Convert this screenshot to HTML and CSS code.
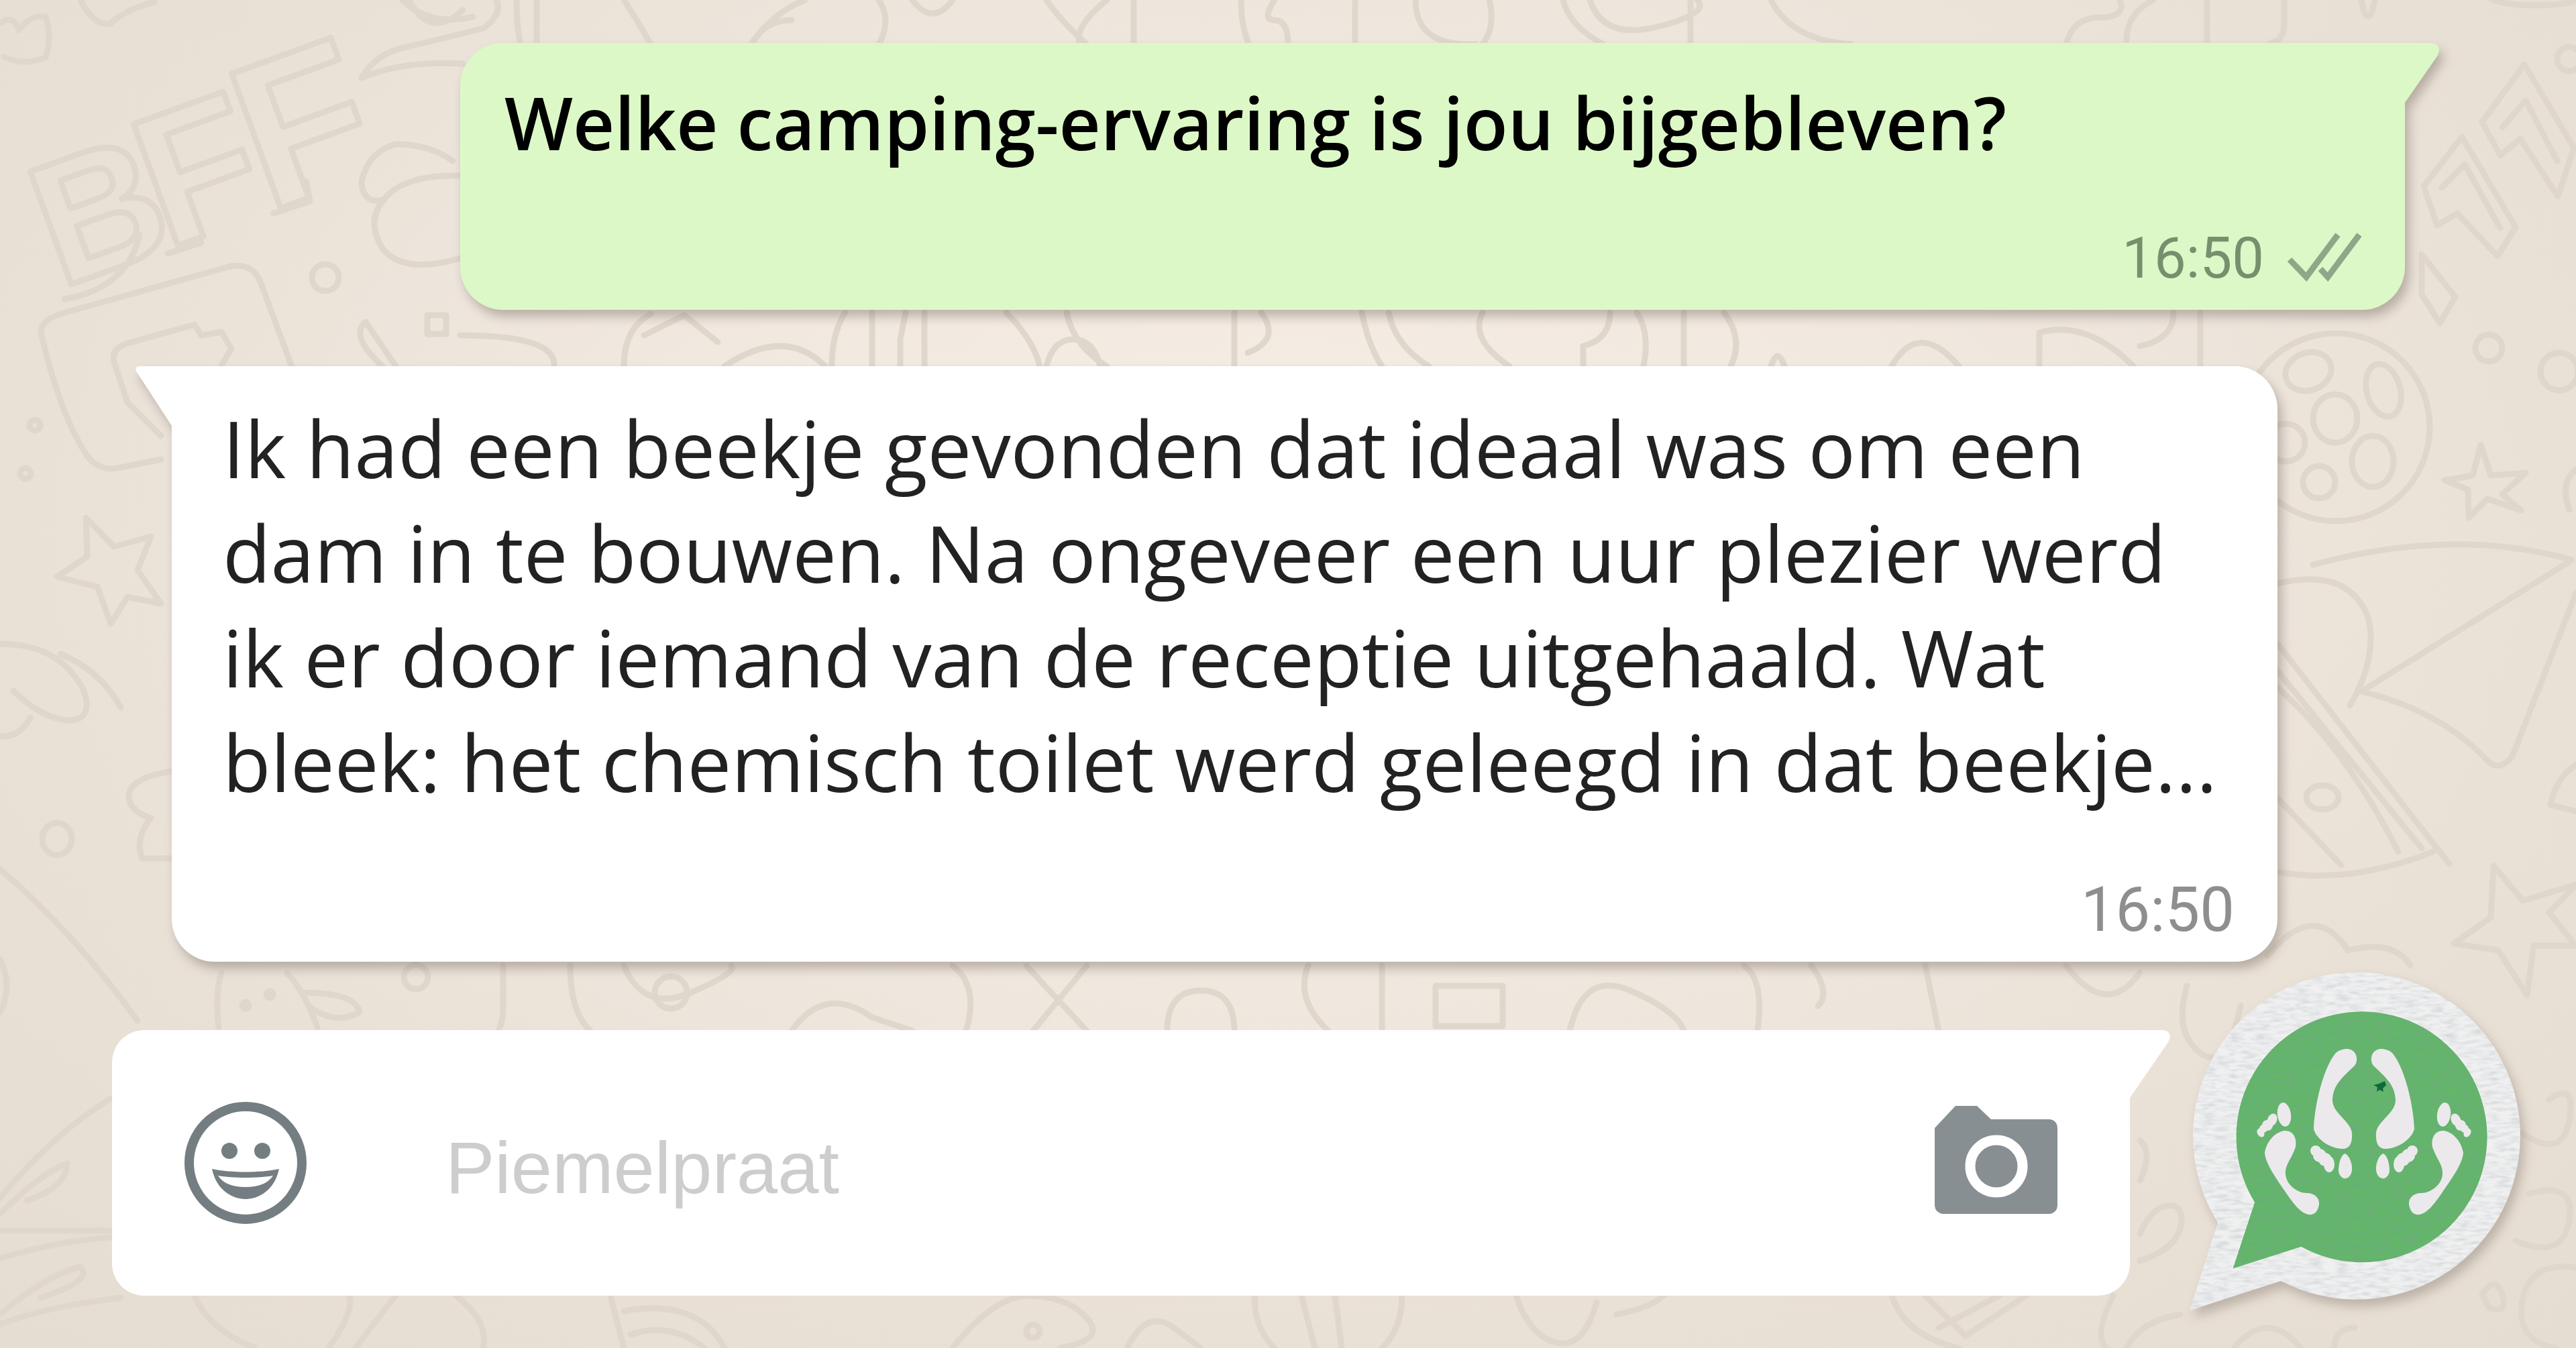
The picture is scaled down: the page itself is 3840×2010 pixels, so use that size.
FILE: index.html
```html
<!DOCTYPE html>
<html lang="nl">
<head>
    <meta charset="UTF-8">
    <meta name="viewport" content="width=device-width, initial-scale=1.0">
    <title>Piemelpraat</title>
    <link rel="stylesheet" href="styles.css">
</head>
<body>
    <svg class="wallpaper" viewBox="0 0 3840 2010" preserveAspectRatio="xMidYMid slice" aria-hidden="true">
        <!-- top left -->
        <g transform="rotate(-20 90 430)" class="doodle-letters">
            <text x="90" y="430"><tspan font-size="260">B</tspan><tspan font-size="280" dx="-20">F</tspan><tspan font-size="310" dx="-10">F</tspan></text>
        </g>
        <path d="M96 446Q190 430 208 350M250 378L300 362M408 318L462 300L456 270"/>
        <path d="M0 35q20 -15 28 10q20 -25 40 -20q10 30 0 60q-30 14 -62 0"/>
        <path d="M120 0q20 40 45 35q20 -20 65 -32"/>
        <path d="M539 116Q560 80 605 70T721 42Q750 20 740 0M539 116Q600 90 690 95M600 0q40 40 105 25"/>
        <path d="M539 270Q550 225 590 215Q640 215 675 240M539 270Q540 305 572 298Q600 260 686 262M572 298Q545 330 570 370Q600 410 686 385"/>
        <circle cx="485" cy="414" r="20"/>
        <rect x="637" y="470" width="28" height="28"/>
        <path d="M62 500Q56 480 90 468L340 398Q375 390 388 420L440 560M62 500Q90 620 130 680Q150 705 180 697L240 685M170 540Q165 520 190 512L290 484L300 500L330 495L345 520L330 545M170 540L190 600L240 650"/>
        <circle cx="52" cy="634" r="8"/>
        <circle cx="38" cy="706" r="8"/>
        <path d="M128 772L170 815L225 800L205 850L240 900L190 890L165 930L145 875L85 860L130 830Z"/>
        <path d="M0 960Q90 960 125 1030Q140 1075 100 1074Q60 1070 20 1030M0 1098Q30 1100 45 1070M90 975Q150 1000 180 1055"/>
        <ellipse cx="85" cy="1251" rx="22" ry="24"/>
        <path d="M0 1296Q110 1390 205 1522M256 1150Q190 1160 192 1190Q195 1210 225 1220Q200 1250 212 1280H256"/>
        <path d="M0 1430q20 40 0 80M0 1786Q80 1690 165 1638M0 1810Q60 1750 100 1735Q100 1770 40 1790M0 1835H165M0 1876Q90 1850 165 1845M0 1960Q70 1900 120 1889Q140 1910 60 1935M0 1975Q60 1950 180 1935"/>
        <!-- right side -->
        <path d="M3700 182L3763 96L3837 221L3813 293L3757 207L3727 232Z"/>
        <path d="M3613 278L3670 204L3750 339L3723 382L3663 318L3633 336Z"/>
        <path d="M3730 190L3765 150L3812 240M3640 280L3674 245L3727 340M3610 379L3660 443L3637 482L3610 439Z"/>
        <ellipse cx="3780" cy="-6" rx="70" ry="14"/>
        <circle cx="3830" cy="88" r="18"/>
        <circle cx="3710" cy="519" r="20"/>
        <circle cx="3815" cy="554" r="28"/>
        <circle cx="3482" cy="637" r="140"/>
        <ellipse cx="3441" cy="554" rx="35" ry="28" transform="rotate(-20 3441 554)"/>
        <ellipse cx="3553" cy="582" rx="25" ry="40" transform="rotate(-15 3553 582)"/>
        <ellipse cx="3481" cy="624" rx="33" ry="36"/>
        <ellipse cx="3537" cy="688" rx="31" ry="38"/>
        <circle cx="3457" cy="719" r="24"/>
        <circle cx="3408" cy="660" r="28"/>
        <path d="M3698 663L3713 709L3765 705L3730 737L3758 761L3708 744L3680 772L3679 730L3644 716L3686 709Z"/>
        <path d="M3717 1291L3761 1343L3840 1319L3800 1361L3840 1410L3777 1410L3767 1484L3724 1417L3658 1407L3713 1368Z"/>
        <path d="M3448 842Q3660 785 3834 835L3520 1031Q3640 1060 3710 1136Q3727 1150 3745 1128L3840 884M3840 700q-25 20 -10 60M3840 1140q-30 20 -38 60l38 10"/>
        <path d="M3395 870Q3500 845 3530 920Q3545 980 3503 1052M3395 960L3651 1288M3395 1000L3610 1265M3395 1025Q3500 1120 3575 1270M3395 1190L3490 1290M3395 1300Q3500 1320 3627 1270"/>
        <ellipse cx="3462" cy="1189" rx="24" ry="18"/>
        <path d="M3380 1425Q3450 1340 3500 1417Q3570 1400 3593 1440M3260 1470q-20 70 20 100t60 -70M3800 1640q40 -30 30 30t-70 20M3770 1780q70 -20 60 40t-80 30M3840 1890q-70 -10 -80 50t50 70M3700 1930q20 -30 30 0t-20 20z"/>
        <path d="M3190 1880q60 -20 62 -60q0 -30 -30 -20q-20 10 -32 40M3190 1700q20 20 0 60"/>
        <!-- strip above the question -->
        <path d="M610 0q30 60 80 15M770 0q0 40 6 66M800 0v66M930 0q20 30 40 66M1200 0q-50 20 -80 66M1180 30q-40 0 -60 36M1310 0q20 30 0 66M1360 0q30 40 60 0M1560 0q20 30 60 66M1650 0q-50 40 -40 66M1690 0v66M1850 0q0 40 12 66M1900 0q-20 30 0 30t20 36M2020 0v66M2110 0q0 70 90 66M2220 0q10 40 -10 66M2330 0q10 40 60 66M2370 0q20 60 100 40t60 -40M2520 0v66M2640 0q30 60 120 66M3080 66q10 -40 50 -40t30 -26M3170 60q0 -40 40 -60M3290 0v62M3405 0v40q-2 20 -20 24M3520 0q10 50 20 0"/>
        <!-- strip between the messages -->
        <path d="M686 500Q830 500 826 546M570 546Q520 500 545 480L590 546M930 546Q930 490 970 468M960 500l60 -30 50 40M1080 546q90 -60 150 0M1260 466q-20 30 -20 80M1300 466v80M1350 466l-8 40v40M1378 466v80M1500 466q40 40 50 80M1590 466q10 50 60 80M1560 546q10 -40 40 -40t40 40M1840 466v80M1880 466q30 40 -20 60M2030 466q10 50 30 80M2070 466q10 50 60 80M2210 466q-20 40 40 80M2400 466q0 40 -40 50v30M2440 466q20 30 10 80M2510 466v80M2570 466q30 40 10 80M2640 546q10 -30 20 0M2820 546q40 -70 100 0M3040 546v-50q70 -20 140 50M3240 466q0 40 -50 50M3280 466v80"/>
        <!-- strip above the input -->
        <path d="M330 1451Q320 1480 326 1532M428 1451Q455 1480 473 1532M450 1480Q530 1480 536 1509Q500 1530 460 1500M750 1440v60q0 30 -10 40M850 1440q0 70 30 97M930 1440q30 70 100 40t60 -40M1180 1537q50 -70 120 -20l60 20M1420 1440q40 30 20 97M1530 1440l90 97M1540 1537l80 -97M1740 1537q0 -60 50 -60t50 60M1950 1440q-20 50 30 97M2060 1440v97M2140 1470h100v60h-100zM2340 1537q20 -90 90 -60t80 60M2600 1440q30 20 20 97M2700 1440q30 40 10 60M2870 1440l20 97M3080 1440q60 80 110 10"/>
        <circle cx="366" cy="1499" r="5"/>
        <circle cx="402" cy="1483" r="5"/>
        <circle cx="620" cy="1457" r="18"/>
        <circle cx="1000" cy="1480" r="24"/>
        <!-- bottom strip -->
        <path d="M290 1932q20 50 90 78M520 1932q10 20 -30 78M590 1932q-40 50 -60 78M680 1932q50 40 40 78M910 1932l20 78M930 1955q110 -20 150 55M940 1990q60 -20 110 20M1420 2010Q1480 1935 1530 1932Q1590 1932 1620 1965T1580 2010M1680 2010q30 -60 70 -30t40 30M1870 1932q0 50 30 78M1940 1932l20 78M1990 1932l10 78M2090 1932q0 50 -30 78M2260 1932q20 60 60 70t60 -60M2410 1960q50 -10 70 -28M2820 1932q20 60 100 78M2870 1932l60 60 90 -60M2890 1980l90 -48M3150 1932q-30 60 -10 78M3170 2010q20 -40 80 -50M3330 2010q50 -60 100 0M3480 2010q0 -30 30 -30"/>
        <circle cx="1540" cy="1985" r="10"/>
    </svg>

    <main class="chat">
        <section class="bubble sent">
            <p class="question">Welke camping-ervaring is jou bijgebleven?</p>
            <div class="meta">
                <time datetime="16:50">16:50</time>
                <svg class="ticks" viewBox="0 0 112 76" role="img" aria-label="Gelezen">
                    <path d="M4 40L29 66L76 3M50 54L61 66L108 3"/>
                </svg>
            </div>
        </section>

        <section class="bubble received">
            <p class="answer">Ik had een beekje gevonden dat ideaal was om een dam in te bouwen. Na ongeveer een uur plezier werd ik er door iemand van de receptie uitgehaald. Wat bleek: het chemisch toilet werd geleegd in dat beekje...</p>
            <div class="meta">
                <time datetime="16:50">16:50</time>
            </div>
        </section>

        <footer class="footer">
            <form class="composer">
                <button type="button" class="icon-button" aria-label="Emoji">
                    <svg class="smiley" viewBox="0 0 183 183">
                        <circle cx="91" cy="91" r="84" fill="none" stroke="#747e82" stroke-width="14"/>
                        <circle cx="67" cy="73" r="12"/>
                        <circle cx="116" cy="73" r="12"/>
                        <path d="M41 100C70 106 112 106 141 100C135 130 112 145 91 145C70 145 47 130 41 100Z"/>
                        <path fill="#fff" d="M50 110C70 114 112 114 132 110C124 122 110 127 91 127C72 127 58 122 50 110Z"/>
                    </svg>
                </button>
                <input type="text" class="message" placeholder="Piemelpraat" aria-label="Bericht">
                <button type="button" class="icon-button" aria-label="Camera">
                    <svg class="camera" viewBox="0 0 183 171">
                        <path d="M31 0H63L84 20H172Q183 22 183 33V149Q182 159 172 161H12Q1 159 0 149V33Z"/>
                        <circle cx="92" cy="90" r="39" fill="none" stroke="#fff" stroke-width="15"/>
                    </svg>
                </button>
            </form>

            <svg class="logo" viewBox="0 0 500 504" role="img" aria-label="Piemelpraat logo">
                <defs>
                    <filter id="paper" x="0" y="0" width="100%" height="100%">
                        <feTurbulence type="fractalNoise" baseFrequency="0.05 0.2" numOctaves="3" seed="4" result="noise"/>
                        <feColorMatrix in="noise" type="matrix" values="0 0 0 0 0.2  0 0 0 0 0.3  0 0 0 0 0.3  0.6 0 0 0 -0.22" result="grain"/>
                        <feComposite in="grain" in2="SourceGraphic" operator="in" result="cut"/>
                        <feMerge>
                            <feMergeNode in="SourceGraphic"/>
                            <feMergeNode in="cut"/>
                        </feMerge>
                    </filter>
                    <g id="feet">
                        <path d="M236 112C251 113 253 130 247 137C227 156 214 167 214 190C216 209 241 220 243 237C244 254 239 261 229 261C206 260 188 243 186 231C187 201 198 145 218 119C223 114 229 112 236 112Z"/>
                        <path d="M233 268C240 272 244 285 243 293C241 309 225 309 223 294C223 284 226 270 233 268Z"/>
                        <circle cx="189" cy="264" r="8"/>
                        <circle cx="195" cy="271" r="10"/>
                        <circle cx="203" cy="277" r="10"/>
                        <ellipse cx="209" cy="284" rx="8" ry="12"/>
                        <path d="M144 234C157 234 161 248 159 258C153 277 143 284 144 299C145 314 161 327 176 327C188 327 195 335 194 344C192 356 186 360 178 359C165 356 155 341 145 327C133 309 114 284 113 267C116 248 131 234 144 234Z"/>
                        <ellipse cx="142" cy="210" rx="10" ry="18" transform="rotate(-8 142 210)"/>
                        <ellipse cx="124" cy="218" rx="7" ry="10" transform="rotate(25 124 218)"/>
                        <circle cx="117" cy="226" r="8"/>
                        <circle cx="111" cy="231" r="6"/>
                        <ellipse cx="107" cy="237" rx="5" ry="7" transform="rotate(-30 107 237)"/>
                    </g>
                </defs>
                <path fill="#f0f0f1" filter="url(#paper)" d="M43 371A244 244 0 1 1 137 458L1 502Z"/>
                <path fill="#64b66b" stroke="#f4f2f4" stroke-width="2" filter="url(#paper)" d="M97 341A188 188 0 1 1 167 408L64 441Z"/>
                <path fill="#0e6a3a" d="M275 166L283 164L292 160L294 166L289 171L290 176L284 173L280 176L281 169Z"/>
                <g fill="#ebe9ec">
                    <use href="#feet"/>
                    <use href="#feet" transform="matrix(-1 0 0 1 522 0)"/>
                </g>
            </svg>
        </footer>
    </main>
</body>
</html>
```
FILE: styles.css
```css
* {
    margin: 0;
    padding: 0;
    box-sizing: border-box;
}

body {
    position: relative;
    min-height: 100vh;
    overflow: hidden;
    background: radial-gradient(ellipse at 50% 40%, #f6ede5 0%, #f1e8e0 35%, #e9e0d6 70%, #e6ddd2 100%);
    font-family: "Open Sans", sans-serif;
    color: #222;
}

.wallpaper {
    position: absolute;
    top: 0;
    left: 0;
    width: 100%;
    height: 100%;
    fill: none;
    stroke: #e0d7cc;
    stroke-width: 9;
    stroke-linejoin: round;
    stroke-linecap: round;
}

.doodle-letters {
    font-family: "Liberation Sans", sans-serif;
    font-weight: bold;
}

.chat {
    position: relative;
    padding: 64px 0 40px;
}

/* messages */
.bubble {
    position: relative;
    border-radius: 64px;
    padding: 44px 64px 22px 66px;
    filter: drop-shadow(6px 10px 8px rgba(90, 75, 65, 0.35));
}

.bubble::before,
.composer::after {
    content: "";
    position: absolute;
    top: 0;
}

.sent {
    margin: 0 255px 84px 686px;
    border-top-right-radius: 0;
    background: #dcf8c7;
}

.sent::before {
    left: calc(100% - 1px);
    width: 54px;
    height: 90px;
    background: #dcf8c7;
    clip-path: path("M0 0H40Q58 3 49 20L1 89H0Z");
}

.received {
    margin: 0 445px 18px 256px;
    padding-left: 76px;
    border-top-left-radius: 0;
    background: #fff;
}

.received::before {
    right: calc(100% - 1px);
    width: 56px;
    height: 90px;
    background: #fff;
    clip-path: path("M56 0H6Q-2 2 3 9L55 89H56Z");
}

.question {
    font-size: 108px;
    font-weight: 600;
    line-height: 150px;
    color: #000;
}

.answer {
    font-size: 117px;
    line-height: 156px;
}

.meta {
    display: flex;
    justify-content: flex-end;
    align-items: center;
    gap: 34px;
    margin-top: 88px;
    font-family: Roboto, sans-serif;
    font-size: 92px;
    line-height: 110px;
    color: #8e8e8e;
}

.sent .meta {
    margin-top: 72px;
    font-size: 85px;
    color: #76906d;
}

.ticks {
    width: 112px;
    height: 76px;
    fill: none;
    stroke: #8fa688;
    stroke-width: 9;
}

/* message box and logo */
.footer {
    display: flex;
    align-items: flex-start;
    gap: 88px;
    padding: 0 77px 0 167px;
}

.composer {
    position: relative;
    flex: 1;
    display: flex;
    align-items: center;
    height: 396px;
    margin-top: 84px;
    padding: 0 108px;
    border-radius: 48px;
    border-top-right-radius: 0;
    background: #fff;
}

.composer::after {
    left: calc(100% - 1px);
    width: 62px;
    height: 102px;
    background: #fff;
    clip-path: path("M0 0H52Q66 4 58 18L1 101H0Z");
}

.icon-button {
    border: none;
    background: none;
    cursor: pointer;
}

.icon-button svg {
    display: block;
}

.smiley {
    width: 183px;
    height: 183px;
    fill: #747e82;
}

.camera {
    width: 183px;
    height: 171px;
    fill: #878f92;
}

.message {
    flex: 1;
    min-width: 0;
    height: 180px;
    margin: 0 64px 0 206px;
    padding-top: 12px;
    border: none;
    outline: none;
    background: none;
    font-family: "Liberation Sans", sans-serif;
    font-size: 110px;
    color: #222;
}

.message::placeholder {
    color: #cdcdcd;
    opacity: 1;
}

.logo {
    flex: none;
    width: 500px;
    height: 504px;
    overflow: visible;
    filter: drop-shadow(6px 10px 8px rgba(90, 75, 65, 0.3));
}
```
